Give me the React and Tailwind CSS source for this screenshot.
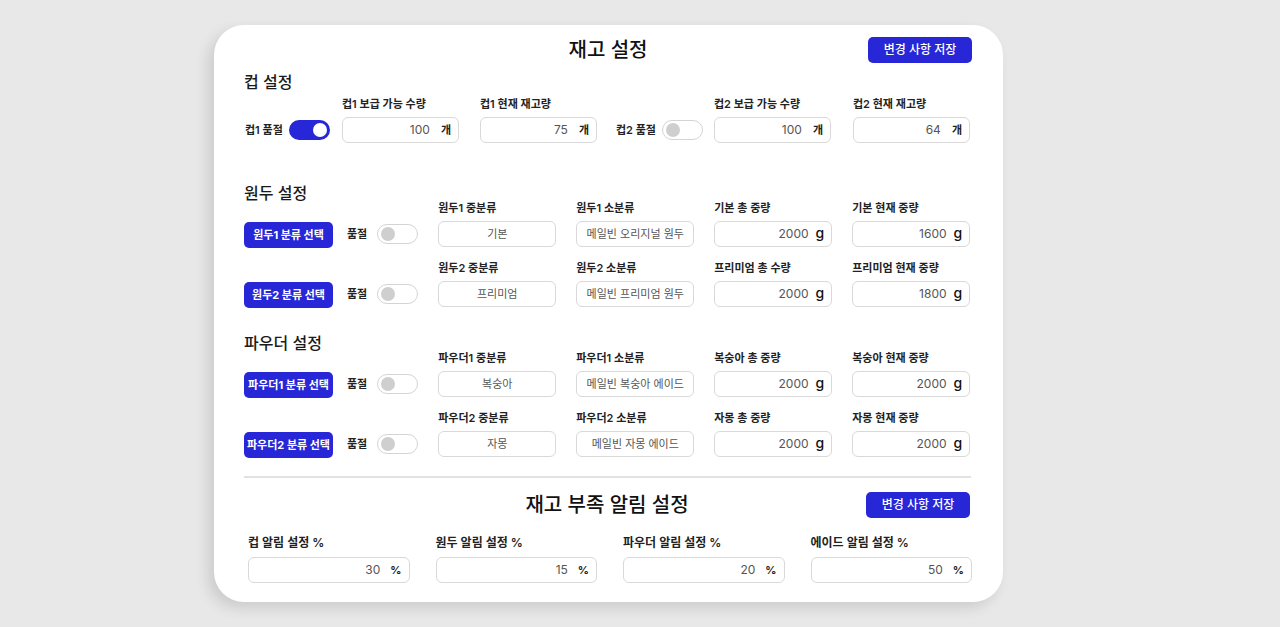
import React from 'react'

const BLUE = 'bg-[#2727d8]'

const Toggle = ({ on }) => (
  <div
    className={`w-[41px] h-[20px] rounded-full flex items-center px-[3px] ${
      on ? `${BLUE} justify-end` : 'bg-white border border-[#d4d4d4] justify-start'
    }`}
  >
    <div className={`w-[14px] h-[14px] rounded-full ${on ? 'bg-white' : 'bg-[#cfcfcf]'}`} />
  </div>
)

const NumField = ({ label, value, unit, width = 'w-[118px]' }) => (
  <div className={`flex flex-col ${width}`}>
    <span className="text-[11px] leading-[12px] font-semibold text-[#222] mb-[7px] whitespace-nowrap">{label}</span>
    <div className="h-[26px] rounded-[6px] border border-[#d9d9d9] bg-white flex items-center justify-end pr-[7px]">
      <span className="text-[12px] text-[#555]">{value}</span>
      {unit === 'g' ? (
        <span className="ml-[7px] text-[14px] font-medium text-[#111] leading-none pb-[2px]">g</span>
      ) : (
        <span className="ml-[11px] text-[11px] font-bold text-[#222]">{unit}</span>
      )}
    </div>
  </div>
)

const TextField = ({ label, value }) => (
  <div className="flex flex-col w-[118px]">
    <span className="text-[11px] leading-[12px] font-semibold text-[#222] mb-[7px] whitespace-nowrap">{label}</span>
    <div className="h-[26px] rounded-[6px] border border-[#d9d9d9] bg-white flex items-center justify-center">
      <span className="text-[11px] text-[#555] whitespace-nowrap">{value}</span>
    </div>
  </div>
)

const SoldOut = ({ label, on, gap, width }) => (
  <div className={`h-[26px] flex items-center ${width}`}>
    <span className="text-[11px] font-semibold text-[#222] whitespace-nowrap">{label}</span>
    <div className={gap}>
      <Toggle on={on} />
    </div>
  </div>
)

const CategoryRow = ({ button, mid, sub, total, current }) => (
  <div className="flex items-end">
    <div className="w-[89px] h-[26px] shrink-0">
      <button className={`w-full h-full rounded-[5px] ${BLUE} text-white text-[11px] font-bold whitespace-nowrap`}>
        {button}
      </button>
    </div>
    <div className="ml-[14px] h-[26px] flex items-center">
      <span className="text-[11px] font-semibold text-[#222]">품절</span>
      <div className="ml-[10px]">
        <Toggle on={false} />
      </div>
    </div>
    <div className="ml-[20px] flex gap-[20px]">
      <TextField label={mid.label} value={mid.value} />
      <TextField label={sub.label} value={sub.value} />
      <NumField label={total.label} value={total.value} unit="g" />
      <NumField label={current.label} value={current.value} unit="g" />
    </div>
  </div>
)

const SectionTitle = ({ children, className = '' }) => (
  <h2 className={`text-[16px] leading-[18px] font-medium text-[#1a1a1a] ${className}`}>{children}</h2>
)

const HeaderRow = ({ title }) => (
  <div className="grid grid-cols-[1fr_auto_1fr] items-center h-[26px]">
    <div />
    <h1 className="text-[20px] leading-[26px] font-medium text-[#111] whitespace-nowrap">{title}</h1>
    <div className="flex justify-end">
      <button className={`w-[104px] h-[26px] rounded-[5px] ${BLUE} text-white text-[12px] font-medium`}>
        변경 사항 저장
      </button>
    </div>
  </div>
)

export default function App() {
  return (
    <div
      className="min-h-screen w-full bg-[#e8e8e8] pt-[25px] pb-[25px]"
      style={{ fontFamily: 'Inter, "Noto Sans CJK KR", "Noto Sans", sans-serif' }}
    >
      <div className="ml-[214px] w-[789px] h-[577px] bg-white rounded-[30px] shadow-[-6px_6px_14px_rgba(0,0,0,0.12)] pl-[30px] pr-[31px] pt-[12px]">
        <HeaderRow title="재고 설정" />

        <SectionTitle className="mt-[10px]">컵 설정</SectionTitle>
        <div className="flex items-end mt-[7px]">
          <SoldOut label="컵1 품절" on gap="ml-[6px]" width="w-[98px] pl-px" />
          <div className="flex gap-[21px]">
            <NumField label="컵1 보급 가능 수량" value="100" unit="개" width="w-[117px]" />
            <NumField label="컵1 현재 재고량" value="75" unit="개" width="w-[117px]" />
          </div>
          <div className="ml-[19px]">
            <SoldOut label="컵2 품절" on={false} gap="ml-[6px]" width="w-[98px]" />
          </div>
          <div className="flex gap-[22px]">
            <NumField label="컵2 보급 가능 수량" value="100" unit="개" width="w-[117px]" />
            <NumField label="컵2 현재 재고량" value="64" unit="개" width="w-[117px]" />
          </div>
        </div>

        <SectionTitle className="mt-[41px]">원두 설정</SectionTitle>
        <div className="flex flex-col gap-[15px]">
          <CategoryRow
            button="원두1 분류 선택"
            mid={{ label: '원두1 중분류', value: '기본' }}
            sub={{ label: '원두1 소분류', value: '메일빈 오리지널 원두' }}
            total={{ label: '기본 총 중량', value: '2000' }}
            current={{ label: '기본 현재 중량', value: '1600' }}
          />
          <CategoryRow
            button="원두2 분류 선택"
            mid={{ label: '원두2 중분류', value: '프리미엄' }}
            sub={{ label: '원두2 소분류', value: '메일빈 프리미엄 원두' }}
            total={{ label: '프리미엄 총 수량', value: '2000' }}
            current={{ label: '프리미엄 현재 중량', value: '1800' }}
          />
        </div>

        <SectionTitle className="mt-[27px]">파우더 설정</SectionTitle>
        <div className="flex flex-col gap-[15px]">
          <CategoryRow
            button="파우더1 분류 선택"
            mid={{ label: '파우더1 중분류', value: '복숭아' }}
            sub={{ label: '파우더1 소분류', value: '메일빈 복숭아 에이드' }}
            total={{ label: '복숭아 총 중량', value: '2000' }}
            current={{ label: '복숭아 현재 중량', value: '2000' }}
          />
          <CategoryRow
            button="파우더2 분류 선택"
            mid={{ label: '파우더2 중분류', value: '자몽' }}
            sub={{ label: '파우더2 소분류', value: '메일빈 자몽 에이드' }}
            total={{ label: '자몽 총 중량', value: '2000' }}
            current={{ label: '자몽 현재 중량', value: '2000' }}
          />
        </div>

        <div className="mt-[19px] h-[2px] bg-[#e2e2e2] w-[727px]" />

        <div className="mt-[14px] pr-[2px]">
          <HeaderRow title="재고 부족 알림 설정" />
        </div>

        <div className="mt-[18px] pl-[4px] flex gap-[26px]">
          {[
            ['컵 알림 설정 %', '30'],
            ['원두 알림 설정 %', '15'],
            ['파우더 알림 설정 %', '20'],
            ['에이드 알림 설정 %', '50'],
          ].map(([label, value]) => (
            <div key={label} className="flex flex-col w-[162px]">
              <span className="text-[12px] leading-[14px] font-semibold text-[#222] mb-[7px] whitespace-nowrap">{label}</span>
              <div className="h-[26px] rounded-[6px] border border-[#d9d9d9] bg-white flex items-center justify-end pr-[7px]">
                <span className="text-[12px] text-[#555]">{value}</span>
                <span className="ml-[10px] text-[11px] font-bold text-[#222]">%</span>
              </div>
            </div>
          ))}
        </div>
      </div>
    </div>
  )
}
